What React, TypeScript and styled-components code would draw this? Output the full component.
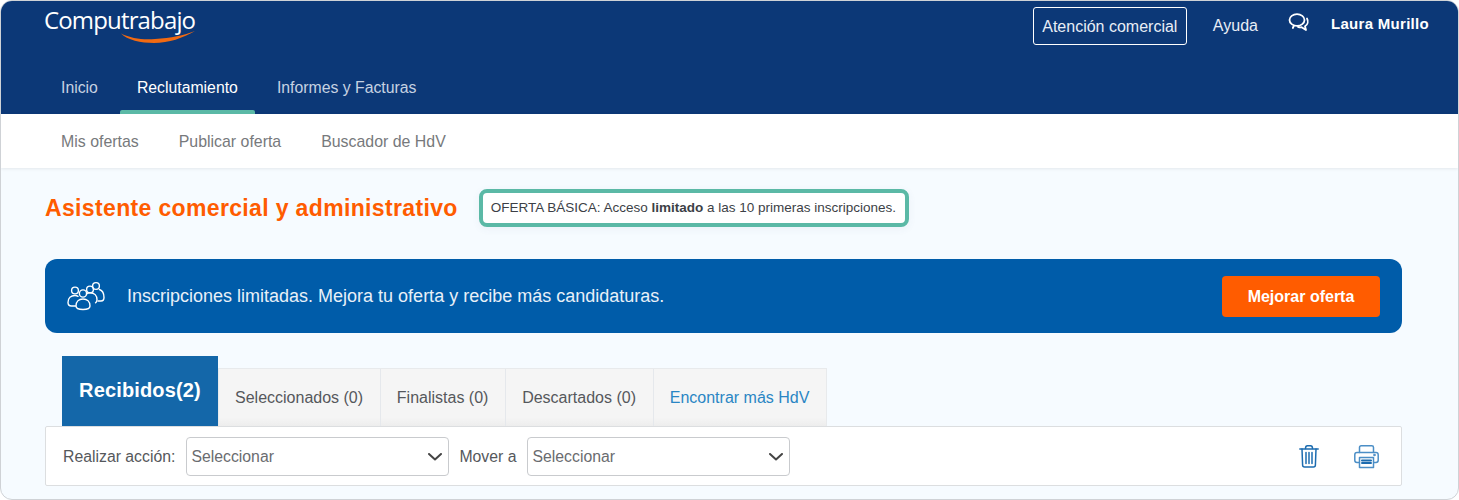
import styled, { createGlobalStyle } from "styled-components";

const GlobalStyle = createGlobalStyle`
    * { box-sizing: border-box; }
    html, body { margin: 0; padding: 0; background: #fff; }
    body { font-family: "Liberation Sans", Arial, sans-serif; }
`;

const mainTabs = [
    { label: "Inicio" },
    { label: "Reclutamiento", active: true },
    { label: "Informes y Facturas" },
];
const subLinks = ["Mis ofertas", "Publicar oferta", "Buscador de HdV"];
const tabs = ["Seleccionados (0)", "Finalistas (0)", "Descartados (0)"];

const Chevron = () => (
    <svg width="14" height="8" viewBox="0 0 14 8" fill="none">
        <path d="M1 1l6 5.500L13 1" stroke="#444" strokeWidth="2" strokeLinecap="round" strokeLinejoin="round" />
    </svg>
);

const ChatIcon = () => (
    <svg width="22" height="20" viewBox="0 0 22 20" fill="none" stroke="#fff" strokeWidth="1.800" strokeLinejoin="round" strokeLinecap="round">
        <ellipse cx="9" cy="7" rx="7.500" ry="5.800" />
        <path d="M6 12.500l-1.200 2.500" />
        <path d="M19 5.500c1.600 2.800.8 6-2 7.700l1 3.800-4.400-2.800c-1.200.2-2.600 0-3.600-.4" />
    </svg>
);

const PeopleIcon = () => (
    <svg width="38" height="30" viewBox="0 0 38 30" fill="none" stroke="#fff" strokeWidth="1.400" strokeLinecap="round" strokeLinejoin="round">
        <circle cx="8" cy="9.500" r="3.400" />
        <circle cx="23" cy="8.500" r="3.400" />
        <circle cx="29" cy="5" r="3.400" />
        <circle cx="16" cy="12.500" r="3.600" />
        <path d="M8.500 25H4.500C2.300 25 1 23.500 1 21.500 1 17 4 14.500 8 14.500c1.200 0 2.200.3 3 .8" />
        <path d="M32.500 8.500c2.600 1 4.500 3.700 4.500 8 0 2-1.200 3.500-3 3.500h-3" />
        <path d="M19.500 13c1-.8 2.200-1.200 3.500-1.200 4.500 0 7 3 7 7 0 1.500-.5 2.500-1.500 3" />
        <path d="M16 18c-4 0-7 2.500-7 7 0 2.500 3 3.500 7 3.500s7-1 7-3.500c0-4.500-3-7-7-7z" />
    </svg>
);

const TrashIcon = () => (
    <svg width="20" height="23" viewBox="0 0 20 23" fill="none" stroke="#1c6cb0" strokeWidth="1.500" strokeLinecap="round" strokeLinejoin="round">
        <path d="M.8 4h18.400" />
        <path d="M6.500 3.500c0-1.800 1-2.700 2-2.700h3c1 0 2 .9 2 2.700" />
        <path d="M3 4l.6 16c0 1.300.8 2 2 2h8.800c1.200 0 2-.7 2-2L17 4" />
        <path d="M7 7.500v11M10 7.500v11M13 7.500v11" />
    </svg>
);

const PrintIcon = () => (
    <svg width="25" height="24" viewBox="0 0 25 24" fill="none" stroke="#4b8ec6" strokeWidth="1.500" strokeLinecap="round" strokeLinejoin="round">
        <path d="M5.500 7.500V2.500c0-1 .6-1.700 1.700-1.700h10.600c1.100 0 1.700.7 1.700 1.700v5" />
        <path d="M5 17.500H3c-1.300 0-2.200-.9-2.200-2.200V9.700c0-1.300.9-2.200 2.200-2.200h19c1.300 0 2.200.9 2.200 2.200v5.600c0 1.300-.9 2.200-2.200 2.200h-2" />
        <path d="M5.500 12.500h14v10h-14z" />
        <path d="M8 15.500h9M8 18h9" stroke="#1c6cb0" strokeWidth="2" />
        <circle cx="20.500" cy="10" r=".6" />
    </svg>
);

const App = () => {
    return (
        <Frame>
            <GlobalStyle />
            <Header>
                <TopRow>
                    <Logo>
                        <LogoText>Computrabajo</LogoText>
                        <Swoosh viewBox="0 0 74 12" width="74" height="12">
                            <path d="M0 2.500c10 5 22 6.500 34 5.500C50 7 63 4.500 74 0 62 7 48 12 33 12 20 12 6 9 0 2.500z" fill="#f26a12" />
                        </Swoosh>
                    </Logo>
                    <TopActions>
                        <OutlineButton>Atención comercial</OutlineButton>
                        <HelpLink>Ayuda</HelpLink>
                        <ChatSlot><ChatIcon /></ChatSlot>
                        <UserName>Laura Murillo</UserName>
                    </TopActions>
                </TopRow>
                <MainNav>
                    {mainTabs.map((tab) => (
                        <MainTab key={tab.label} $active={tab.active}>{tab.label}</MainTab>
                    ))}
                </MainNav>
            </Header>
            <SubNav>
                {subLinks.map((link) => (
                    <SubLink key={link}>{link}</SubLink>
                ))}
            </SubNav>
            <Content>
                <TitleRow>
                    <Title>Asistente comercial y administrativo</Title>
                    <OfferNote>OFERTA BÁSICA: Acceso <b>limitado</b> a las 10 primeras inscripciones.</OfferNote>
                </TitleRow>
                <Banner>
                    <BannerIcon><PeopleIcon /></BannerIcon>
                    <BannerText>Inscripciones limitadas. Mejora tu oferta y recibe más candidaturas.</BannerText>
                    <UpgradeButton>Mejorar oferta</UpgradeButton>
                </Banner>
                <TabBar>
                    <ActiveTab>Recibidos(2)</ActiveTab>
                    <TabStrip>
                        {tabs.map((tab) => (
                            <Tab key={tab}>{tab}</Tab>
                        ))}
                        <Tab $link>Encontrar más HdV</Tab>
                    </TabStrip>
                </TabBar>
                <Toolbar>
                    <FieldLabel>Realizar acción:</FieldLabel>
                    <SelectBox>Seleccionar<Chevron /></SelectBox>
                    <FieldLabel>Mover a</FieldLabel>
                    <SelectBox>Seleccionar<Chevron /></SelectBox>
                    <ToolIcons>
                        <TrashIcon />
                        <PrintIcon />
                    </ToolIcons>
                </Toolbar>
            </Content>
        </Frame>
    );
};

const Frame = styled.div`
    width: 1459px;
    height: 500px;
    border: 1px solid #cfd2d6;
    border-radius: 12px;
    overflow: hidden;
    background: #f6fbff;
    display: flex;
    flex-direction: column;
`;

const Header = styled.header`
    background: #0c3877;
    height: 113px;
    display: flex;
    flex-direction: column;
    justify-content: space-between;
`;

const TopRow = styled.div`
    display: flex;
    justify-content: space-between;
    align-items: flex-start;
    padding: 6px 29px 0 43px;
`;

const Logo = styled.div`
    display: flex;
    flex-direction: column;
    width: 152px;
    margin-top: -2px;
`;

const LogoText = styled.span`
    font-family: "Open Sans", sans-serif;
    font-size: 24px;
    font-weight: 500;
    line-height: 30px;
    letter-spacing: -0.85px;
    color: #fff;
`;

const Swoosh = styled.svg`
    margin: -4px 0 0 77px;
`;

const TopActions = styled.div`
    display: flex;
    align-items: flex-start;
    color: #fff;
`;

const OutlineButton = styled.div`
    width: 154px;
    height: 38px;
    border: 1px solid #fff;
    border-radius: 3px;
    font-size: 16px;
    line-height: 38px;
    text-align: center;
    color: #e8eef6;
`;

const HelpLink = styled.div`
    margin: 9px 0 0 26px;
    font-size: 16px;
    line-height: 20px;
    color: #e8eef6;
`;

const ChatSlot = styled.div`
    margin: 6px 0 0 30px;
    height: 20px;
`;

const UserName = styled.div`
    margin: 7px 0 0 21px;
    font-size: 15px;
    font-weight: 700;
    line-height: 20px;
    letter-spacing: 0.3px;
`;

const MainNav = styled.nav`
    display: flex;
    padding-left: 43px;
`;

const MainTab = styled.div<{ $active?: boolean }>`
    position: relative;
    padding: 0 17px;
    margin-right: 5px;
    height: 54px;
    line-height: 56px;
    font-size: 15.8px;
    color: ${(p) => (p.$active ? "#fff" : "#c6d2e2")};
    &::after {
        content: "";
        display: ${(p) => (p.$active ? "block" : "none")};
        position: absolute;
        left: 0;
        right: 0;
        bottom: 0;
        height: 4px;
        background: #5bb9a6;
        border-radius: 2px 2px 0 0;
    }
`;

const SubNav = styled.nav`
    background: #fff;
    height: 54px;
    padding: 2px 0 0 60px;
    display: flex;
    align-items: center;
    gap: 40px;
    box-shadow: 0 1px 3px rgba(0, 0, 0, 0.08);
`;

const SubLink = styled.div`
    font-size: 15.9px;
    color: #77797c;
`;

const Content = styled.main`
    flex: 1;
    padding: 0 56px 0 44px;
`;

const TitleRow = styled.div`
    display: flex;
    align-items: center;
    margin-top: 21px;
`;

const Title = styled.h1`
    margin: 0;
    font-size: 23px;
    font-weight: 700;
    line-height: 38px;
    letter-spacing: 0.35px;
    color: #ff5c00;
`;

const OfferNote = styled.div`
    margin-left: 21px;
    width: 430px;
    height: 38px;
    background: #fff;
    border: 4px solid #5bb9a6;
    border-radius: 8px;
    font-size: 13.5px;
    line-height: 30px;
    padding-left: 8px;
    color: #3c3f46;
    white-space: nowrap;
    box-shadow: 0 2px 8px rgba(60, 90, 130, 0.06);
`;

const Banner = styled.section`
    display: flex;
    align-items: center;
    height: 74px;
    margin-top: 32px;
    background: #005ca9;
    border-radius: 12px;
    padding: 0 22px 0 22px;
`;

const BannerIcon = styled.div`
    width: 60px;
    height: 30px;
`;

const BannerText = styled.p`
    flex: 1;
    margin: 0;
    font-size: 18px;
    color: #e8f0f8;
`;

const UpgradeButton = styled.div`
    width: 158px;
    height: 41px;
    background: #ff5c00;
    border-radius: 4px;
    color: #fff;
    font-size: 16px;
    font-weight: 700;
    line-height: 41px;
    text-align: center;
`;

const TabBar = styled.div`
    display: flex;
    align-items: flex-end;
    margin: 23px 0 0 17px;
`;

const ActiveTab = styled.div`
    width: 156px;
    height: 70px;
    background: #1467a9;
    color: #fff;
    font-size: 20px;
    font-weight: 700;
    letter-spacing: 0.15px;
    text-align: center;
    line-height: 68px;
`;

const TabStrip = styled.div`
    display: flex;
    height: 58px;
    border: 1px solid #e8eaec;
    border-bottom: 0;
    background: linear-gradient(#f5f5f5 85%, #ededed);
`;

const Tab = styled.div<{ $link?: boolean }>`
    padding: 0 16.75px 0 16px;
    font-size: 16px;
    line-height: 57px;
    color: ${(p) => (p.$link ? "#2a86c4" : "#55585c")};
    border-right: 1px solid #e5e8ec;
    &:last-child { border-right: 0; }
`;

const Toolbar = styled.div`
    display: flex;
    align-items: center;
    height: 60px;
    padding: 1px 22px 0 17px;
    background: #fff;
    border: 1px solid #dcdee0;
    border-radius: 2px;
`;

const FieldLabel = styled.label`
    font-size: 15.8px;
    color: #55585c;
    margin-right: 11px;
    &:not(:first-child) { margin-left: 10px; }
`;

const SelectBox = styled.div`
    width: 263px;
    height: 39px;
    display: flex;
    align-items: center;
    justify-content: space-between;
    padding: 1px 6px 0 4px;
    background: #fff;
    border: 1px solid #c9cbce;
    border-radius: 4px;
    font-size: 15.8px;
    color: #6a6c70;
`;

const ToolIcons = styled.div`
    margin-left: auto;
    display: flex;
    align-items: center;
    gap: 35px;
`;

export default App;
